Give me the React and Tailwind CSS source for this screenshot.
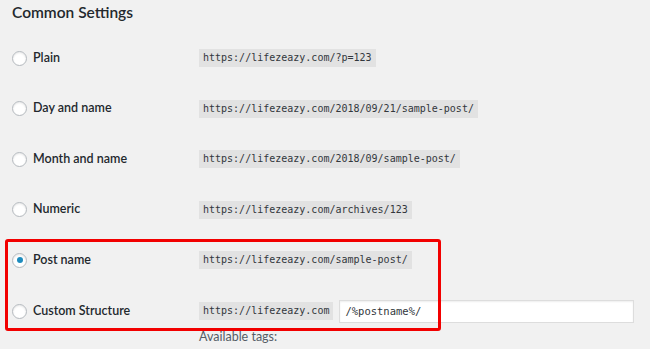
const options = [
  { label: 'Plain', url: 'https://lifezeazy.com/?p=123' },
  { label: 'Day and name', url: 'https://lifezeazy.com/2018/09/21/sample-post/' },
  { label: 'Month and name', url: 'https://lifezeazy.com/2018/09/sample-post/' },
  { label: 'Numeric', url: 'https://lifezeazy.com/archives/123' },
  { label: 'Post name', url: 'https://lifezeazy.com/sample-post/', checked: true },
]

const sans = { fontFamily: 'Lato, "Open Sans", sans-serif' }

function Radio({ checked }) {
  return (
    <span className="w-[15px] h-[15px] rounded-full border border-[#b4b9be] bg-white shadow-[inset_0_1px_2px_rgba(0,0,0,0.1)] flex items-center justify-center shrink-0">
      {checked && <span className="w-[6px] h-[6px] rounded-full bg-[#1e8cbe]" />}
    </span>
  )
}

function Code({ children }) {
  return (
    <code className="bg-[#e2e2e2] text-[#32373c] text-[10px] leading-[14px] px-[4px] py-[2px] font-['DejaVu_Sans_Mono',monospace] whitespace-nowrap">
      {children}
    </code>
  )
}

export default function App() {
  return (
    <div className="relative w-[650px] h-[349px] overflow-hidden bg-[#f1f1f1] pl-[12px] text-[#23282d]" style={sans}>
      <h2 className="h-[33px] pt-[3px] text-[15.5px] leading-[18px] font-semibold">Common Settings</h2>

      {options.map((o) => (
        <div key={o.label} className="h-[50.5px] flex items-center">
          <label className="w-[187px] flex items-center gap-[6px] text-[12.5px] font-semibold">
            <Radio checked={o.checked} />
            <span>{o.label}</span>
          </label>
          <Code>{o.url}</Code>
        </div>
      ))}

      {/* Custom structure */}
      <div className="flex pt-[14px]">
        <label className="w-[187px] h-[23px] flex items-center gap-[6px] text-[12.5px] font-semibold">
          <Radio />
          <span>Custom Structure</span>
        </label>
        <div>
          <div className="flex items-center gap-[6px]">
            <Code>https://lifezeazy.com</Code>
            <input
              readOnly
              value="/%postname%/"
              className="w-[295px] h-[23px] bg-white border border-[#ddd] shadow-[inset_0_1px_2px_rgba(0,0,0,0.07)] px-[5px] text-[10.5px] text-[#32373c] font-['DejaVu_Sans_Mono',monospace] outline-none"
            />
          </div>
          <p className="mt-[6px] text-[12.5px] leading-[16px] text-[#555d66]">Available tags:</p>
        </div>
      </div>

      {/* highlight */}
      <div className="absolute left-[5px] top-[239px] w-[436px] h-[92px] border-[3px] border-[#f20000] rounded-[3px] pointer-events-none" />
    </div>
  )
}
